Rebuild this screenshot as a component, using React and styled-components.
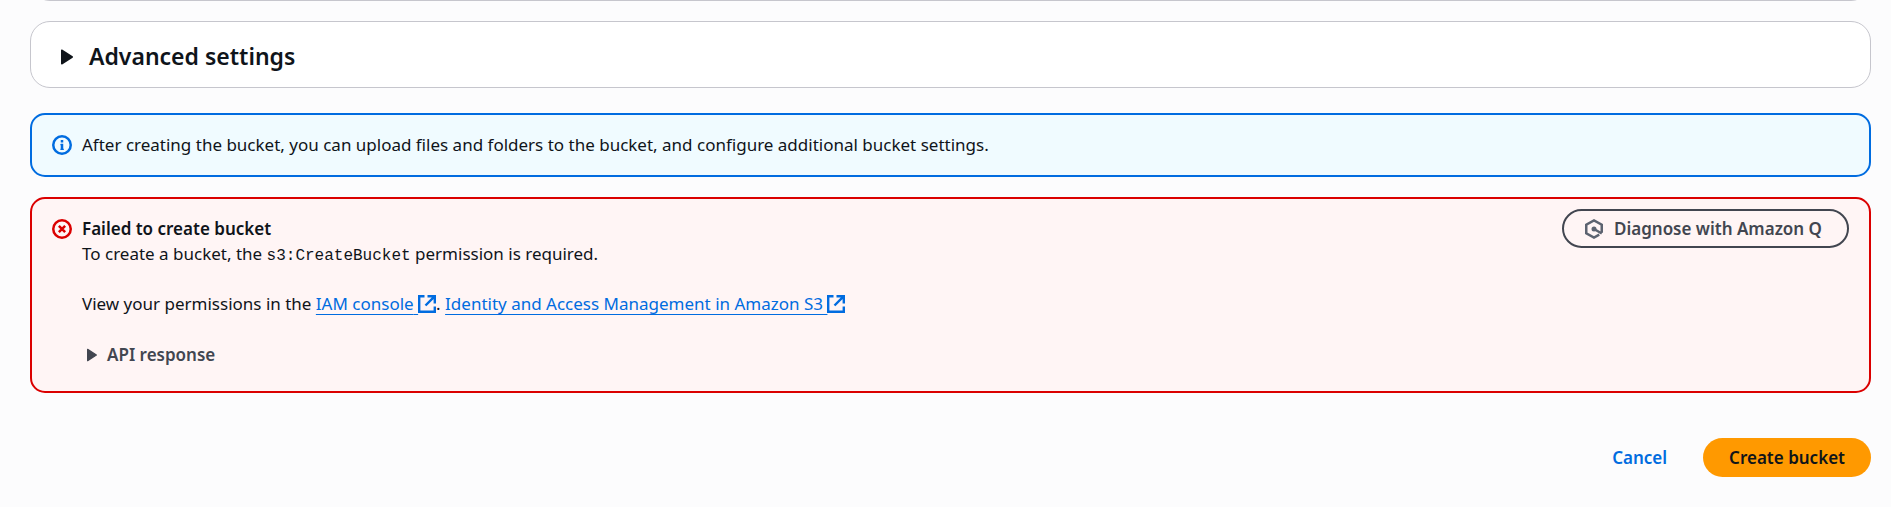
import React from "react";
import styled, { createGlobalStyle } from "styled-components";

const Global = createGlobalStyle`
  *, *::before, *::after { box-sizing: border-box; }
  body {
    margin: 0;
    background: #fcfcfd;
    color: #0f141a;
    font-family: "Noto Sans", "Open Sans", sans-serif;
    font-size: 17px;
    line-height: 25px;
  }
  h2, h3, p { margin: 0; }
`;

const Page = styled.main`
  display: flex;
  flex-direction: column;
  padding: 0 20px 30px 30px;
`;

const Panel = styled.section`
  background: #ffffff;
  border: 1px solid #c6c6cd;
  border-radius: 20px;
`;

const PreviousPanel = styled(Panel)`
  height: 40px;
  margin-top: -39px;
  margin-bottom: 20px;
`;

const PanelHeading = styled.h2`
  font-size: 23px;
  line-height: 29px;
`;

const PanelToggle = styled.button`
  display: flex;
  align-items: center;
  gap: 10px;
  width: 100%;
  padding: 20px 24px 16px;
  border: 0;
  background: none;
  color: inherit;
  font: inherit;
  font-weight: 600;
  text-align: left;
  cursor: pointer;
`;

const Alert = styled.section`
  display: flex;
  align-items: flex-start;
  gap: 10px;
  margin-top: ${({ $gap }) => $gap}px;
  padding: 10px 20px;
  border: 2px solid ${({ $tone }) => $tone};
  border-radius: 15px;
  background: ${({ $fill }) => $fill};
`;

const AlertIcon = styled.svg`
  flex: none;
  width: 20px;
  height: 20px;
  margin: 10px 0;
  fill: none;
  stroke: ${({ $tone }) => $tone};
  stroke-width: 2;
`;

const AlertBody = styled.div`
  flex: 1;
  padding: 7px 0;
`;

const AlertTitle = styled.h3`
  font-size: 17px;
  line-height: 25px;
  font-weight: 600;
`;

const Paragraph = styled.p`
  margin-bottom: 25px;
`;

const Code = styled.code`
  font-family: "Liberation Mono", monospace;
  font-size: 16px;
  line-height: 20px;
`;

const Link = styled.a`
  color: #006ce0;
  text-decoration: underline 1px;
  text-underline-offset: 4px;
  text-decoration-skip-ink: none;
`;

const ExternalSvg = styled.svg`
  width: 18px;
  height: 18px;
  vertical-align: -3px;
  fill: none;
  stroke: currentColor;
  stroke-width: 2.4;
`;

const ResponseToggle = styled.button`
  display: flex;
  align-items: center;
  gap: 5px;
  margin-bottom: 6px;
  padding: 0;
  border: 0;
  background: none;
  color: #424650;
  font: inherit;
  font-weight: 600;
  line-height: 27px;
  cursor: pointer;
`;

const Caret = styled.svg`
  flex: none;
  width: ${({ $size }) => $size}px;
  height: ${({ $size }) => $size}px;
  fill: currentColor;
  stroke: currentColor;
  stroke-linejoin: round;
`;

const Button = styled.button`
  display: flex;
  align-items: center;
  justify-content: center;
  gap: 10px;
  height: 39px;
  padding: 0 ${({ $outlined }) => ($outlined ? "25px 0 20px" : "24px")};
  border: 2px solid ${({ $outlined }) => ($outlined ? "#424650" : "transparent")};
  border-radius: 20px;
  background: ${({ $primary }) => ($primary ? "#ff9900" : "transparent")};
  color: ${({ $primary, $outlined }) => ($primary ? "#0f141a" : $outlined ? "#424650" : "#006ce0")};
  font: inherit;
  font-weight: 600;
  white-space: nowrap;
  cursor: pointer;
`;

const ButtonIcon = styled.svg`
  width: 20px;
  height: 20px;
  fill: none;
  stroke: #5c6370;
  stroke-width: 2;
`;

const Actions = styled.footer`
  display: flex;
  justify-content: flex-end;
  gap: 10px;
  margin-top: 45px;
`;

function CaretRight({ size }) {
  return (
    <Caret $size={size} viewBox="0 0 16 16" aria-hidden="true">
      <path d="M4.5 3.5v9L11.5 8z" />
    </Caret>
  );
}

function ExternalLink({ href, children }) {
  return (
    <Link href={href}>
      {children}{" "}
      <ExternalSvg viewBox="0 0 18 18" aria-hidden="true">
        <path d="M6.5 1.2H1.2v15.6h15.6v-5.3" />
        <path d="M9.5 1.2h7.3v7.3M7.5 10.5l9.3-9.3" />
      </ExternalSvg>
    </Link>
  );
}

export default function App() {
  return (
    <>
      <Global />
      <Page>
        <PreviousPanel aria-hidden="true" />
        <Panel>
          <PanelHeading>
            <PanelToggle type="button" aria-expanded="false">
              <CaretRight size={24} />
              Advanced settings
            </PanelToggle>
          </PanelHeading>
        </Panel>

        <Alert $gap={25} $tone="#006ce0" $fill="#f0fbff">
          <AlertIcon $tone="#006ce0" viewBox="0 0 16 16" aria-hidden="true">
            <circle cx="8" cy="8" r="7" />
            <path d="M8 12V7M8 6V4" />
            <path d="M6.8 7.6H8M6.8 11.5h2.6" strokeWidth="1" />
          </AlertIcon>
          <AlertBody>
            After creating the bucket, you can upload files and folders to the bucket, and configure
            additional bucket settings.
          </AlertBody>
        </Alert>

        <Alert $gap={20} $tone="#db0000" $fill="#fff5f5" role="alert">
          <AlertIcon $tone="#db0000" viewBox="0 0 16 16" aria-hidden="true">
            <circle cx="8" cy="8" r="7" />
            <path d="m10.5 5.5-5 5M5.5 5.5l5 5" />
          </AlertIcon>
          <AlertBody>
            <AlertTitle>Failed to create bucket</AlertTitle>
            <Paragraph>
              To create a bucket, the <Code>s3:CreateBucket</Code> permission is required.
            </Paragraph>
            <Paragraph>
              View your permissions in the <ExternalLink href="#iam">IAM console</ExternalLink>.{" "}
              <ExternalLink href="#s3-access">Identity and Access Management in Amazon S3</ExternalLink>
            </Paragraph>
            <ResponseToggle type="button" aria-expanded="false">
              <CaretRight size={20} />
              API response
            </ResponseToggle>
          </AlertBody>
          <Button type="button" $outlined>
            <ButtonIcon viewBox="0 0 16 16" aria-hidden="true">
              <path d="M14.2 11V4.6L8 1.2 1.8 4.6v6.8L8 14.8l4.2-2.3M8 8l6.2 3.6" />
              <circle cx="8" cy="8" r="1" />
            </ButtonIcon>
            Diagnose with Amazon Q
          </Button>
        </Alert>

        <Actions>
          <Button type="button">Cancel</Button>
          <Button type="button" $primary>Create bucket</Button>
        </Actions>
      </Page>
    </>
  );
}
